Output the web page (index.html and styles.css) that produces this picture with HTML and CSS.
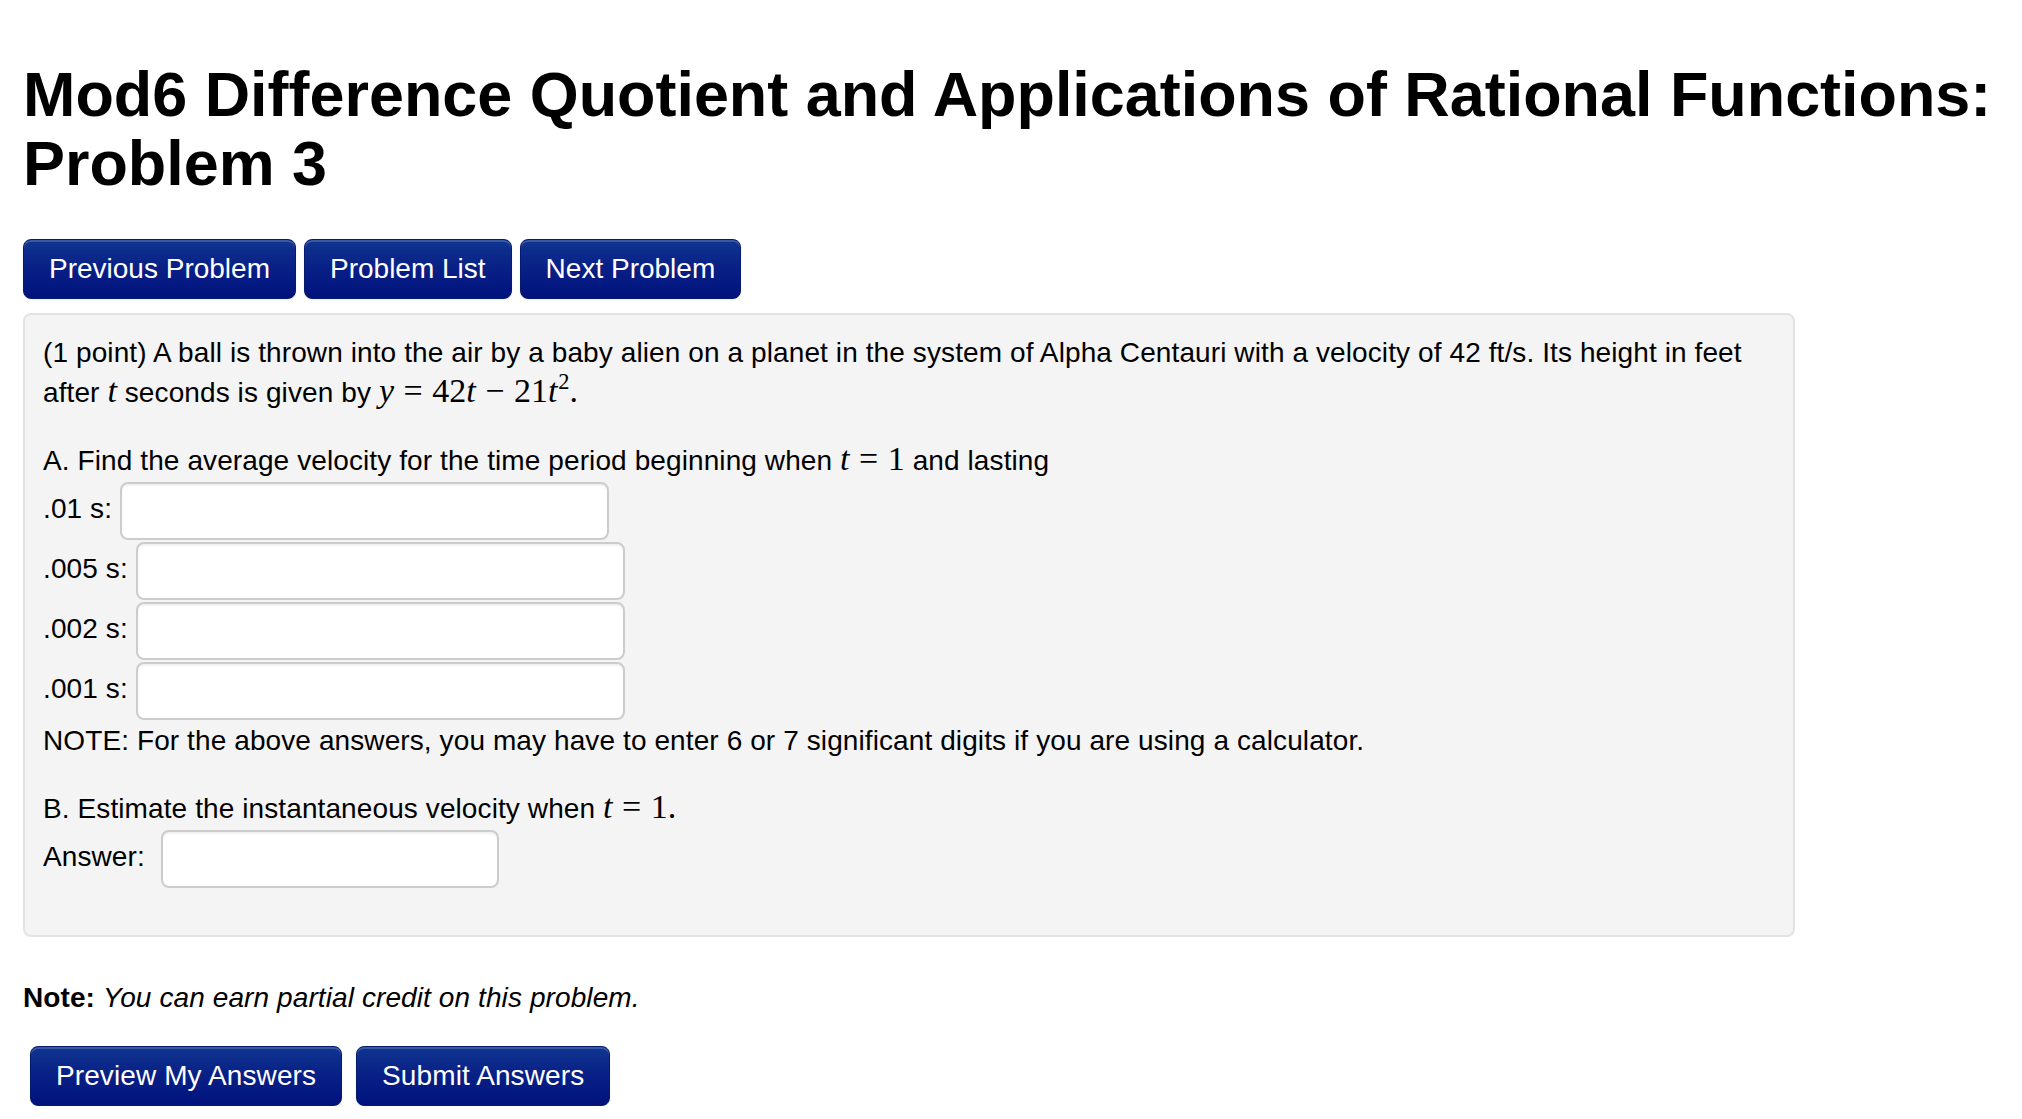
FILE: index.html
```html
<!DOCTYPE html>
<html lang="en">
<head>
<meta charset="utf-8">
<title>Mod6 Difference Quotient and Applications of Rational Functions: Problem 3</title>
<link rel="stylesheet" href="styles.css">
</head>
<body>
<div class="page">
  <h1 class="title">Mod6 Difference Quotient and Applications of Rational Functions: Problem 3</h1>

  <div class="nav-buttons">
    <a class="btn" href="#">Previous Problem</a>
    <a class="btn" href="#">Problem List</a>
    <a class="btn" href="#">Next Problem</a>
  </div>

  <div class="problem">
    <p class="para">(1 point) A ball is thrown into the air by a baby alien on a planet in the system of Alpha Centauri with a velocity of 42 ft/s. Its height in feet<br>
    after <span class="math"><i>t</i></span> seconds is given by <span class="math"><i>y</i><span class="op">=</span>42<i>t</i><span class="op">−</span>21<i>t</i><sup class="sup">2</sup>.</span></p>

    <p class="para">A. Find the average velocity for the time period beginning when <span class="math"><i>t</i><span class="op">=</span>1</span> and lasting<br>
    .01 s: <input class="ans ans-wide" type="text"><br>
    .005 s: <input class="ans ans-wide" type="text"><br>
    .002 s: <input class="ans ans-wide" type="text"><br>
    .001 s: <input class="ans ans-wide" type="text"><br>
    NOTE: For the above answers, you may have to enter 6 or 7 significant digits if you are using a calculator.</p>

    <p class="para">B. Estimate the instantaneous velocity when <span class="math"><i>t</i><span class="op">=</span>1.</span><br>
    Answer:&nbsp; <input class="ans ans-narrow" type="text"></p>
  </div>

  <p class="note"><b>Note:</b> <i>You can earn partial credit on this problem.</i></p>

  <div class="submit-buttons">
    <button class="btn btn-wide" type="button">Preview My Answers</button>
    <button class="btn btn-wide" type="button">Submit Answers</button>
  </div>
</div>
</body>
</html>
```

FILE: styles.css
```css
html, body {
  margin: 0;
  padding: 0;
  background: #ffffff;
}

body {
  font-family: "Liberation Sans", Arial, Helvetica, sans-serif;
  font-size: 28px;
  line-height: 40px;
  letter-spacing: 0.1px;
  color: #000;
}

.page {
  padding: 60px 10px 0 23px;
}

.title {
  margin: 0;
  font-size: 62.9px;
  line-height: 69px;
  letter-spacing: 0;
  font-weight: bold;
  color: #000;
}

.nav-buttons {
  display: flex;
  gap: 8px;
  margin-top: 41px;
}

.btn {
  display: inline-block;
  box-sizing: border-box;
  height: 60px;
  padding: 9px 25px;
  font-family: "Liberation Sans", Arial, Helvetica, sans-serif;
  font-size: 28px;
  line-height: 40px;
  letter-spacing: 0;
  color: #fff;
  text-decoration: none;
  white-space: nowrap;
  background: linear-gradient(to bottom, #0f3590 0%, #081f85 50%, #00127d 100%);
  border: 1px solid #051b6e;
  border-radius: 8px;
  box-shadow: inset 0 2px 0 rgba(255, 255, 255, 0.18), 0 1px 2px rgba(0, 0, 0, 0.08);
  cursor: pointer;
}

.btn-wide {
  letter-spacing: 0.1px;
}

.problem {
  margin-top: 14px;
  width: 1772px;
  box-sizing: border-box;
  padding: 18px;
  background: #f4f4f4;
  border: 2px solid #e3e3e3;
  border-radius: 8px;
}

.para {
  margin: 0 0 28px 0;
}

.math {
  font-family: "Liberation Serif", "Times New Roman", serif;
  font-size: 34px;
  line-height: 1;
  letter-spacing: 0;
}

.math i {
  font-style: italic;
}

.op {
  margin: 0 0.28em;
}

.sup {
  font-size: 0.66em;
  line-height: 0;
  vertical-align: 0.58em;
  margin-left: 1px;
}

.ans {
  box-sizing: border-box;
  height: 58px;
  margin: 1px 0;
  padding: 8px 12px;
  vertical-align: middle;
  font-family: "Liberation Sans", Arial, Helvetica, sans-serif;
  font-size: 28px;
  line-height: 40px;
  background: #fff;
  border: 2px solid #cccccc;
  border-radius: 8px;
  box-shadow: inset 0 2px 2px rgba(0, 0, 0, 0.06);
  outline: none;
}

.ans-wide {
  width: 489px;
}

.ans-narrow {
  width: 338px;
}

.note {
  margin: 41px 0 0 0;
}

.note b {
  font-weight: bold;
}

.submit-buttons {
  display: flex;
  gap: 14px;
  margin-top: 28px;
  margin-left: 7px;
}
```
